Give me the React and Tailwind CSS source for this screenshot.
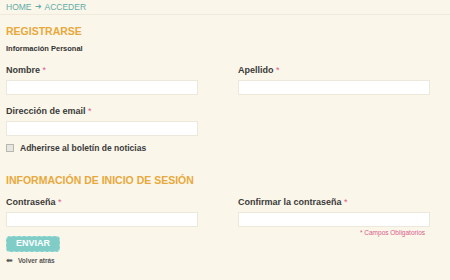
import React from "react";

function Field({ label }) {
  return (
    <div className="flex flex-col">
      <label className="text-[9px] font-bold text-[#3a3a3a] leading-[11px] h-[11px]">
        {label} <span className="text-[#d9608a] font-normal">*</span>
      </label>
      <input className="mt-[4px] h-[15px] w-[192px] bg-white border border-[#ece8dc] outline-none" />
    </div>
  );
}

export default function App() {
  return (
    <div
      className="w-[450px] h-[280px] bg-[#faf6ea] overflow-hidden"
      style={{ fontFamily: '"Liberation Sans", Arial, sans-serif' }}
    >
      <div className="px-[6px] h-[15px] border-b border-[#efeadb] flex items-center text-[8.5px] text-[#62aca7]">
        HOME <span className="mx-[3px] text-[8px]">➜</span> ACCEDER
      </div>
      <div className="px-[6px]">
        <h1 className="mt-[10px] text-[10.5px] font-bold text-[#e8a93c] leading-[12px]">REGISTRARSE</h1>
        <div className="mt-[7px] text-[7.5px] font-bold text-[#333] leading-[9px]">Información Personal</div>

        <div className="mt-[12px] grid grid-cols-[232px_1fr]">
          <Field label="Nombre" />
          <Field label="Apellido" />
        </div>
        <div className="mt-[11px]">
          <Field label="Dirección de email" />
        </div>
        <div className="mt-[6px] flex items-center gap-[6px]">
          <span className="w-[8px] h-[8px] border border-[#b9b6ae] bg-[#e8e6e0]" />
          <span className="text-[8.5px] font-bold text-[#3a3a3a]">Adherirse al boletín de noticias</span>
        </div>

        <h2 className="mt-[19px] text-[10.5px] font-bold text-[#e8a93c] leading-[12px]">INFORMACIÓN DE INICIO DE SESIÓN</h2>

        <div className="mt-[11px] grid grid-cols-[232px_1fr]">
          <Field label="Contraseña" />
          <Field label="Confirmar la contraseña" />
        </div>

        <div className="grid grid-cols-[232px_1fr]">
          <div>
            <button className="mt-[9px] w-[54px] h-[16px] rounded-[4px] bg-[#80cdc8] border border-dashed border-[#a9e0dc] text-white text-[9px] font-bold">
              ENVIAR
            </button>
            <div className="mt-[3px] flex items-center gap-[5px] text-[6.5px] text-[#555]">
              <span className="text-[8px] leading-[8px] text-[#555]">⬅</span>
              <span className="font-bold">Volver atrás</span>
            </div>
          </div>
          <div className="w-[192px] text-right pr-[5px] mt-[2px] text-[6.5px] text-[#d9608a] leading-[8px]">* Campos Obligatorios</div>
        </div>
      </div>
    </div>
  );
}
